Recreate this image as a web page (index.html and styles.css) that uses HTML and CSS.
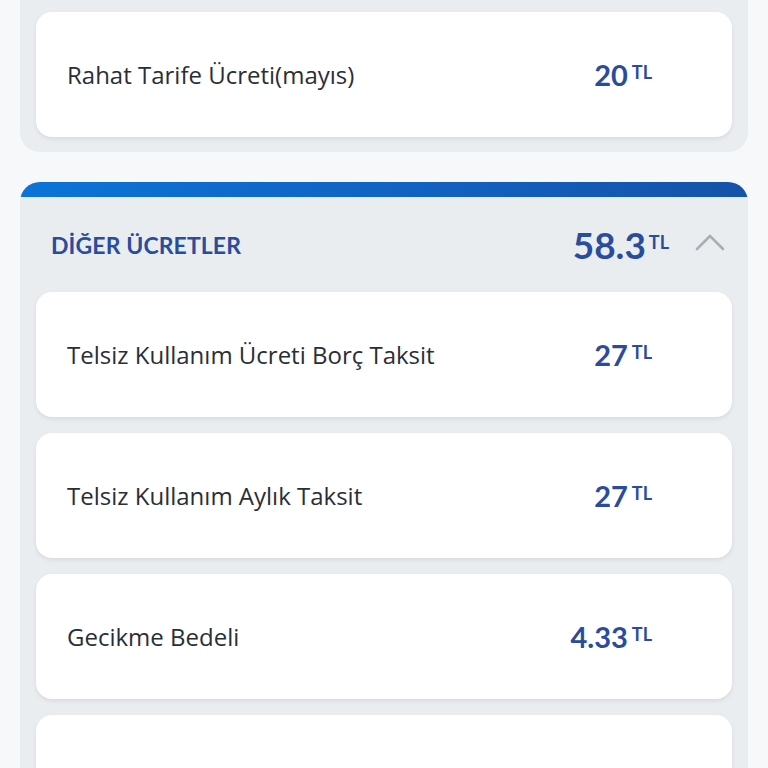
FILE: index.html
```html
<!DOCTYPE html>
<html lang="tr">
<head>
  <meta charset="UTF-8" />
  <title>Fatura Detayı</title>
  <link rel="stylesheet" href="styles.css">
</head>
<body>
  <div class="section section-top">
    <div class="item">
      <span class="item-label">Rahat Tarife Ücreti(mayıs)</span>
      <span class="amount"><b>20</b><small>TL</small></span>
    </div>
  </div>

  <div class="section section-open">
    <div class="bar"></div>
    <div class="section-head">
      <span class="section-title">DİĞER ÜCRETLER</span>
      <span class="amount amount-big"><b>58.3</b><small>TL</small></span>
      <svg class="chevron" width="30" height="18" viewBox="0 0 30 18">
        <path d="M2 16 L15 3 L28 16" fill="none" stroke="#a9aeb5" stroke-width="2.6" stroke-linecap="round" stroke-linejoin="round"/>
      </svg>
    </div>
    <div class="list">
      <div class="item">
        <span class="item-label">Telsiz Kullanım Ücreti Borç Taksit</span>
        <span class="amount"><b>27</b><small>TL</small></span>
      </div>
      <div class="item">
        <span class="item-label">Telsiz Kullanım Aylık Taksit</span>
        <span class="amount"><b>27</b><small>TL</small></span>
      </div>
      <div class="item">
        <span class="item-label">Gecikme Bedeli</span>
        <span class="amount"><b>4.33</b><small>TL</small></span>
      </div>
      <div class="item item-last">
        <span class="item-label">Damga Vergisi</span>
        <span class="amount"><b>0.00</b><small>TL</small></span>
      </div>
    </div>
  </div>
</body>
</html>
```

FILE: styles.css
```css
* {
  box-sizing: border-box;
}

body {
  margin: 0;
  padding: 0;
  background: #f7f8f9;
  font-family: 'Lato', 'Noto Sans', sans-serif;
  color: #2a2e36;
  height: 768px;
  overflow: hidden;
}

.section {
  margin: 0 20px;
  background: #e9edf0;
}

.section-top {
  padding: 12px 16px 15px;
  border-radius: 0 0 20px 20px;
}

.section-open {
  margin-top: 30px;
  border-radius: 20px 20px 0 0;
  overflow: hidden;
}

.bar {
  height: 15px;
  background: linear-gradient(90deg, #0b74d8, #1260c0 60%, #1553a9);
}

.section-head {
  display: flex;
  align-items: center;
  height: 95px;
  padding: 0 23px 0 31px;
}

.section-title {
  flex: 1;
  font-size: 23px;
  font-weight: 700;
  color: #2a4c9c;
  letter-spacing: 0.1px;
}

.chevron {
  margin-left: 26px;
  margin-top: -6px;
}

.list {
  display: flex;
  flex-direction: column;
  gap: 16px;
  padding: 0 16px;
}

.item {
  display: flex;
  align-items: center;
  height: 125px;
  padding: 0 80px 0 31px;
  background: #fff;
  border-radius: 16px;
  box-shadow: 0 2px 4px rgba(0, 0, 0, 0.08);
}

.item-last {
  align-items: flex-start;
  padding-top: 47px;
}

.item-label {
  flex: 1;
  font-family: 'Open Sans', 'Lato', sans-serif;
  font-size: 24px;
}

.amount {
  color: #2a4c9c;
  display: flex;
  align-items: baseline;
  gap: 4px;
}

.amount b {
  font-size: 29px;
  font-weight: 700;
}

.amount small {
  font-size: 18px;
  font-weight: 700;
  position: relative;
  top: -7px;
}

.amount-big {
  gap: 3px;
}

.amount-big b {
  font-size: 37px;
}

.amount-big small {
  top: -10px;
}
```
